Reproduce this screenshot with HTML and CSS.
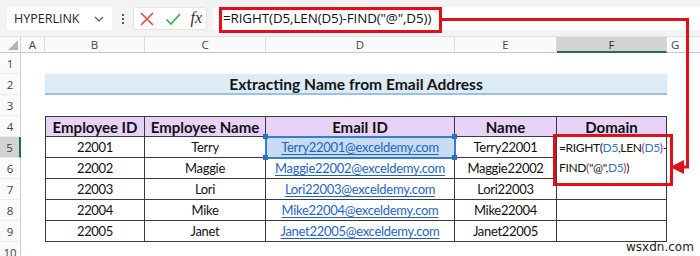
FILE: index.html
```html
<!DOCTYPE html>
<html>
<head>
<meta charset="utf-8">
<link rel="stylesheet" href="styles.css">
</head>
<body>
<div class="app">
  <div class="fbar">
    <div class="namebox"><span class="nb-text">HYPERLINK</span>
      <svg class="chev" width="10" height="6" viewBox="0 0 10 6"><path d="M1 1 L5 5 L9 1" fill="none" stroke="#555" stroke-width="1.2"/></svg>
    </div>
    <div class="dots"><i></i><i></i><i></i></div>
    <div class="btns">
      <svg width="16" height="16" viewBox="0 0 16 16"><path d="M2 2 L14 14 M14 2 L2 14" stroke="#e2474b" stroke-width="1.6" fill="none"/></svg>
      <svg width="16" height="16" viewBox="0 0 16 16"><path d="M1.5 8.5 L6 13 L15 3" stroke="#3fa55a" stroke-width="1.6" fill="none"/></svg>
      <span class="fx">fx</span>
    </div>
    <div class="ffield">=RIGHT(D5,LEN(D5)-FIND("@",D5))</div>
  </div>

  <div class="sheet">
    <div class="corner"><svg width="10" height="10" viewBox="0 0 10 10"><path d="M10 0 L10 10 L0 10 Z" fill="#b4b4b4"/></svg></div>
    <div class="ch">A</div><div class="ch">B</div><div class="ch">C</div><div class="ch">D</div><div class="ch">E</div><div class="ch sel">F</div><div class="ch last">G</div>

    <div class="rh">1</div><div class="c"></div><div class="c span5"></div><div class="c"></div>

    <div class="rh">2</div><div class="c"></div><div class="c span5 title">Extracting Name from Email Address</div><div class="c"></div>

    <div class="rh">3</div><div class="c"></div><div class="c span5"></div><div class="c"></div>

    <div class="rh">4</div><div class="c"></div>
    <div class="t th first top">Employee ID</div><div class="t th top">Employee Name</div><div class="t th top">Email ID</div><div class="t th top">Name</div><div class="t th top">Domain</div><div class="c"></div>

    <div class="rh sel">5</div><div class="c"></div>
    <div class="t first">22001</div><div class="t">Terry</div><div class="t ref"><span class="link">Terry22001@exceldemy.com</span><i class="hd tl"></i><i class="hd tr"></i><i class="hd bl"></i><i class="hd br"></i></div><div class="t">Terry22001</div><div class="t"></div><div class="c"></div>

    <div class="rh">6</div><div class="c"></div>
    <div class="t first">22002</div><div class="t">Maggie</div><div class="t"><span class="link">Maggie22002@exceldemy.com</span></div><div class="t">Maggie22002</div><div class="t"></div><div class="c"></div>

    <div class="rh">7</div><div class="c"></div>
    <div class="t first">22003</div><div class="t">Lori</div><div class="t"><span class="link">Lori22003@exceldemy.com</span></div><div class="t">Lori22003</div><div class="t"></div><div class="c"></div>

    <div class="rh">8</div><div class="c"></div>
    <div class="t first">22004</div><div class="t">Mike</div><div class="t"><span class="link">Mike22004@exceldemy.com</span></div><div class="t">Mike22004</div><div class="t"></div><div class="c"></div>

    <div class="rh">9</div><div class="c"></div>
    <div class="t first">22005</div><div class="t">Janet</div><div class="t"><span class="link">Janet22005@exceldemy.com</span></div><div class="t">Janet22005</div><div class="t"></div><div class="c"></div>

    <div class="rh">10</div><div class="c"></div><div class="c span5"></div><div class="c"></div>
  </div>

  <div class="edit">
    <div>=RIGHT(<span class="r">D5</span>,LEN<span class="p">(</span><span class="r">D5</span><span class="p">)</span>-</div>
    <div>FIND<span class="p">(</span>"@",<span class="r">D5</span><span class="p">)</span>)</div>
  </div>

  <div class="hl hl-bar"></div>
  <div class="hl hl-cell"></div>
  <svg class="connector" width="700" height="256" viewBox="0 0 700 256">
    <path d="M441 19.5 L687.5 19.5 L687.5 167 L682 167" fill="none" stroke="#e0101a" stroke-width="3"/>
    <path d="M670 167 L684 160 L684 174 Z" fill="#e0101a"/>
  </svg>
  <div class="wm">wsxdn.com</div>
</div>
</body>
</html>
```

FILE: styles.css
```css
* { box-sizing: border-box; }
html, body { margin: 0; padding: 0; background: #ffffff; }
.app { position: relative; width: 700px; height: 256px; overflow: hidden; font-family: Lato, "Noto Sans", sans-serif; }

.fbar {
  height: 37px;
  background: #f3f3f3;
  display: flex;
  align-items: flex-start;
  padding: 7px 0 0 7px;
  border-bottom: 1px solid #e2e2e2;
}
.namebox {
  width: 105px; height: 23px;
  background: #fff;
  border-radius: 3px;
  display: flex; align-items: center; justify-content: space-between;
  padding: 0 8px 0 7px;
  font-family: "Open Sans", "Noto Sans", sans-serif;
  font-size: 12.5px; color: #262626;
}
.dots { width: 21px; height: 23px; display: flex; flex-direction: column; align-items: center; justify-content: center; gap: 2px; }
.dots i { display: block; width: 2px; height: 2px; background: #555; }
.btns {
  width: 74px; height: 23px;
  background: #fff; border: 1px solid #e3e3e3; border-radius: 3px;
  display: flex; align-items: center; justify-content: space-between;
  padding: 0 4px 0 5px;
}
.fx { font-family: "Liberation Serif", serif; font-style: italic; font-size: 16px; color: #333; margin-top: -2px; }
.ffield {
  margin-left: 6px; flex: 1; height: 23px;
  background: #fff; border-radius: 3px 0 0 3px;
  padding: 2px 0 0 10px;
  font-family: "Open Sans", "Noto Sans", sans-serif;
  font-size: 13.4px; color: #111; letter-spacing: -0.1px;
}

.sheet {
  display: grid;
  grid-template-columns: 21px 24px 100px 121px 189px 102px 110px 33px;
  grid-template-rows: 16px repeat(10, 21px);
  font-size: 13px; color: #111;
}
.corner { background: #fafafa; border-right: 1px solid #cfcfcf; border-bottom: 1px solid #c8c8c8; display: flex; align-items: flex-end; justify-content: flex-end; padding: 0 2px 2px 0; }
.ch {
  background: #fafafa; border-right: 1px solid #dadada; border-bottom: 1px solid #c8c8c8;
  font-family: "Open Sans", sans-serif; font-size: 11.5px; color: #444;
  display: flex; align-items: center; justify-content: center;
}
.ch.sel { background: #d3d3d3; border-bottom: 2px solid #1e7145; color: #333; }
.ch.last { border-right: none; justify-content: flex-start; padding-left: 4px; }
.rh {
  background: #fafafa; border-right: 1px solid #cfcfcf; border-bottom: 1px solid #ececec;
  font-family: "Open Sans", sans-serif; font-size: 11.5px; color: #444;
  display: flex; align-items: center; justify-content: center;
}
.rh.sel { background: #d3d3d3; border-right: 2px solid #1e7145; }
.c { background: #fff; }
.span5 { grid-column: span 5; }
.title {
  background: #ddebf7; border-bottom: 2px solid #9bc2e6;
  display: flex; align-items: center; justify-content: center;
  font-weight: bold; font-size: 15.6px; color: #151515; padding-top: 1px;
}
.t {
  border-right: 1px solid #3a3a3a; border-bottom: 1px solid #3a3a3a;
  display: flex; align-items: center; justify-content: center;
  font-size: 13px; letter-spacing: -0.3px; white-space: nowrap;
}
.t.first { border-left: 1px solid #3a3a3a; }
.t.top { border-top: 1px solid #3a3a3a; }
.th { background: #e6d3f7; font-weight: bold; font-size: 15px; letter-spacing: 0; }
.link { color: #1f64c0; text-decoration: underline; text-underline-offset: 2px; }
.ref { position: relative; background: #c5dcf1; outline: 2px solid #3a7cc9; outline-offset: -1px; }
.hd { position: absolute; width: 5px; height: 5px; background: #2f6fbf; }
.hd.tl { left: -3px; top: -3px; }
.hd.tr { right: -3px; top: -3px; }
.hd.bl { left: -3px; bottom: -3px; }
.hd.br { right: -3px; bottom: -3px; }

.edit {
  position: absolute; left: 557px; top: 137px; width: 110px; height: 43px;
  background: #fff; font-size: 12px; line-height: 20px; padding: 1px 0 0 2px;
  color: #111; white-space: nowrap; letter-spacing: -0.35px;
  border-right: 1px solid #3a3a3a;
}
.edit .r { color: #2f78c8; }
.edit .p { color: #8e2f7a; }

.hl { position: absolute; border: 3px solid #e0101a; }
.hl-bar { left: 219px; top: 7px; width: 223px; height: 26px; }
.hl-cell { left: 553px; top: 134px; width: 120px; height: 52px; }
.connector { position: absolute; left: 0; top: 0; pointer-events: none; }
.wm { position: absolute; left: 626px; top: 240px; font-family: "DejaVu Sans", sans-serif; font-size: 12px; color: #222; }
```
